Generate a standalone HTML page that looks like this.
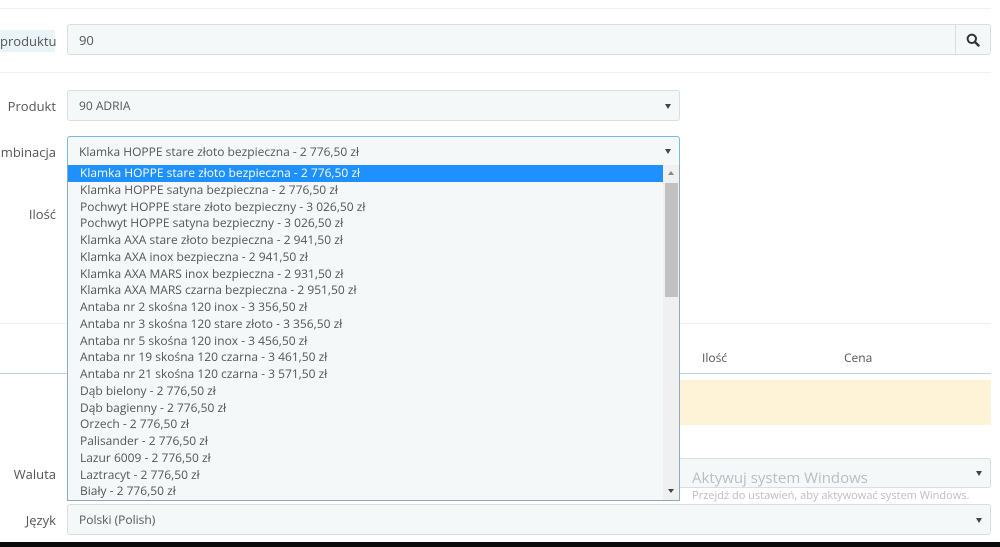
<!DOCTYPE html>
<html><head><meta charset="utf-8"><style>
*{box-sizing:border-box;margin:0;padding:0}
body{width:1000px;height:547px;overflow:hidden;background:#fff;font-family:"Open Sans","DejaVu Sans","Liberation Sans",sans-serif;font-size:12px;color:#555;position:relative}
.a{position:absolute}
.hl{position:absolute;left:0;width:991px;height:1px;background:#eef0f2}
.inp{position:absolute;background:#f5f8f9;border:1px solid #d8dee2;border-radius:3px;padding-left:11px;display:flex;align-items:center;color:#555}
.lbl{position:absolute;font-size:13px;color:#555;text-align:right}
.arr{position:absolute;right:8px;top:50%;margin-top:-2px;width:0;height:0;border-left:3px solid transparent;border-right:3px solid transparent;border-top:5px solid #444}
.list{position:absolute;left:67px;top:165px;width:613px;height:336px;background:#f5f8f9;border:1px solid #8fa8c0;border-top:none;overflow:hidden}
.row{height:16.75px;line-height:16.75px;padding-left:12px;font-size:12px;color:#555;white-space:nowrap}
.row.sel{background:#1e90ff;color:#fff;width:595px}
</style></head><body>
<div class="hl" style="top:8px"></div>
<div class="hl" style="top:72px"></div>
<div class="hl" style="top:323px"></div>
<div class="a" style="left:0;top:373px;width:991px;height:1px;background:#bcd3e0"></div>

<div class="a" style="left:0;top:30px;width:55px;height:22px;background:#eaf3f8;border-radius:2px;font-size:13px;line-height:22px;color:#555">produktu</div>
<div class="inp" style="left:67px;top:24px;width:889px;height:31px;border-radius:3px 0 0 3px;font-size:13px">90</div>
<div class="inp" style="left:955px;top:24px;width:36px;height:31px;border-radius:0 3px 3px 0;padding:0;justify-content:center">
<svg width="14" height="14" viewBox="0 0 14 14"><circle cx="5.8" cy="5.8" r="4.2" fill="none" stroke="#333" stroke-width="2"/><path d="M8.8 8.8L12.5 12.5" stroke="#333" stroke-width="2.4" stroke-linecap="round"/></svg></div>

<div class="lbl" style="left:0;top:97px;width:56px">Produkt</div>
<div class="inp" style="left:67px;top:90px;width:613px;height:31px">90 ADRIA<span class="arr"></span></div>

<div class="lbl" style="left:0;top:143px;width:56px">mbinacja</div>
<div class="inp" style="left:67px;top:136px;width:613px;height:30px;border-color:#7cb8e0;border-radius:3px 3px 0 0;font-size:12px">Klamka HOPPE stare złoto bezpieczna - 2 776,50 zł<span class="arr"></span></div>

<div class="lbl" style="left:0;top:205px;width:56px">Ilość</div>

<div class="a" style="left:702px;top:349px;font-size:12px">Ilość</div>
<div class="a" style="left:844px;top:349px;font-size:12px">Cena</div>
<div class="a" style="left:680px;top:380px;width:311px;height:45px;background:#fff3d7"></div>

<div class="lbl" style="left:0;top:465px;width:56px">Waluta</div>
<div class="inp" style="left:680px;top:458px;width:311px;height:30px;border-left:none;border-radius:0 3px 3px 0"><span class="arr"></span></div>
<div class="a" style="left:692px;top:468px;font-size:15px;color:#b9bec2">Aktywuj system Windows</div>
<div class="a" style="left:692px;top:488px;font-size:11px;color:#b9bec2">Przejdź do ustawień, aby aktywować system Windows.</div>

<div class="lbl" style="left:0;top:511px;width:56px">Język</div>
<div class="inp" style="left:67px;top:504px;width:924px;height:31px">Polski (Polish)<span class="arr"></span></div>

<div class="list">
<div class="row sel">Klamka HOPPE stare złoto bezpieczna - 2 776,50 zł</div>
<div class="row">Klamka HOPPE satyna bezpieczna - 2 776,50 zł</div>
<div class="row">Pochwyt HOPPE stare złoto bezpieczny - 3 026,50 zł</div>
<div class="row">Pochwyt HOPPE satyna bezpieczny - 3 026,50 zł</div>
<div class="row">Klamka AXA stare złoto bezpieczna - 2 941,50 zł</div>
<div class="row">Klamka AXA inox bezpieczna - 2 941,50 zł</div>
<div class="row">Klamka AXA MARS inox bezpieczna - 2 931,50 zł</div>
<div class="row">Klamka AXA MARS czarna bezpieczna - 2 951,50 zł</div>
<div class="row">Antaba nr 2 skośna 120 inox - 3 356,50 zł</div>
<div class="row">Antaba nr 3 skośna 120 stare złoto - 3 356,50 zł</div>
<div class="row">Antaba nr 5 skośna 120 inox - 3 456,50 zł</div>
<div class="row">Antaba nr 19 skośna 120 czarna - 3 461,50 zł</div>
<div class="row">Antaba nr 21 skośna 120 czarna - 3 571,50 zł</div>
<div class="row">Dąb bielony - 2 776,50 zł</div>
<div class="row">Dąb bagienny - 2 776,50 zł</div>
<div class="row">Orzech - 2 776,50 zł</div>
<div class="row">Palisander - 2 776,50 zł</div>
<div class="row">Lazur 6009 - 2 776,50 zł</div>
<div class="row">Laztracyt - 2 776,50 zł</div>
<div class="row">Biały - 2 776,50 zł</div>
<div class="a" style="left:595px;top:0;width:17px;height:336px;background:#f0f0f0">
<div class="a" style="left:5px;top:6px;border-left:3px solid transparent;border-right:3px solid transparent;border-bottom:4px solid #888"></div>
<div class="a" style="left:2px;top:18px;width:13px;height:114px;background:#c1c1c1"></div>
<div class="a" style="left:5px;top:324px;border-left:3px solid transparent;border-right:3px solid transparent;border-top:4px solid #444"></div>
</div>
</div>

<div class="a" style="left:0;top:542px;width:1000px;height:5px;background:#0b0b0b"></div>
</body></html>
